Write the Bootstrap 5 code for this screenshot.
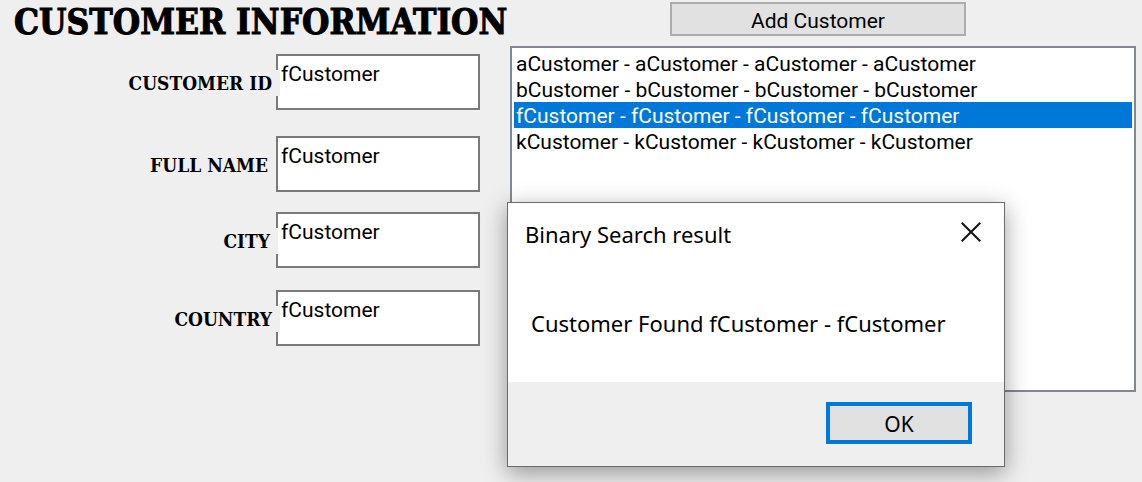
<!DOCTYPE html>
<html lang="en">
<head>
<meta charset="utf-8">
<meta name="viewport" content="width=device-width, initial-scale=1">
<title>Customer Information</title>
<link href="https://cdn.jsdelivr.net/npm/bootstrap@5.3.0/dist/css/bootstrap.min.css" rel="stylesheet">
<style>
  :root { --face: #efefef; --ctl: #e1e1e1; --accent: #0078d9; }
  body {
    background: var(--face); color: #000; min-height: 100vh;
    font-family: Roboto, "Liberation Sans", sans-serif;
    font-size: 21px; line-height: 26px;
  }
  .stencil { font-family: "DejaVu Serif Condensed", "DejaVu Serif", serif; font-weight: 700; text-transform: uppercase; }
  .app-head { height: 46px; padding: 2px 176px 0 14px; }
  .app-title { font-size: 35px; line-height: 40px; white-space: nowrap; -webkit-text-stroke: 1px #000; }
  .add-btn { width: 296px; height: 34px; background: var(--ctl); border: 2px solid #adadad; border-radius: 0; font-size: 21px; line-height: 26px; color: #000; padding: 4px 0 0; }
  .fields { width: 480px; margin-top: 8px; display: grid; grid-template-rows: 82px 76px 78px 56px; }
  .field-label { position: relative; z-index: 1; background: var(--face); font-size: 19px; line-height: 26px; margin-top: 16px; padding-right: 8px; }
  .lap-2 { margin-right: -2px; }
  .lap-4 { margin-right: -4px; }
  .field-box { width: 204px; height: 56px; padding: 2px 3px 18px; border: 2px solid #7a7a7a; border-radius: 0; font-size: 21px; line-height: 32px; color: #000; background: #fff; }
  .result-list { height: 346px; margin: 0 6px 0 30px; padding: 2px; border: 2px solid #828790; border-radius: 0; background: #fff; font-size: 21px; color: #000; overflow: hidden; outline: 0; }
  .result-list option { height: 26px; min-height: 26px; padding: 2px 2px 0; border-radius: 0; }
  .result-list option:checked { background: linear-gradient(var(--accent), var(--accent)); -webkit-text-fill-color: #fff; }
  .msg-box { position: absolute; left: 507px; top: 202px; width: 498px; z-index: 5; background: #fff; border: 1px solid #6b6b6b; box-shadow: 0 6px 22px rgba(0,0,0,.38); font-family: "Noto Sans", sans-serif; font-size: 22px; line-height: 30px; }
  .msg-head { padding: 16px 23px 0 17px; }
  .msg-title { font-size: 22px; line-height: 30px; }
  .msg-close { margin-top: 3px; }
  .msg-text { padding: 59px 23px 44px; }
  .msg-foot { background: var(--face); padding: 20px 32px 22px; }
  .ok-btn { width: 146px; height: 42px; padding: 2px 0 0; background: var(--ctl); border: 4px solid var(--accent); border-radius: 0; font-family: inherit; font-size: 21px; line-height: 32px; color: #000; }
</style>
</head>
<body class="position-relative">
  <header class="app-head d-flex justify-content-between align-items-start">
    <h1 class="app-title stencil m-0">Customer Information</h1>
    <button type="button" class="btn add-btn">Add Customer</button>
  </header>

  <main class="d-flex align-items-start">
    <form class="fields flex-shrink-0">
      <div class="d-flex justify-content-end align-items-start">
        <label class="field-label stencil lap-4" for="customerId">Customer ID</label>
        <input class="field-box" id="customerId" type="text" value="fCustomer">
      </div>
      <div class="d-flex justify-content-end align-items-start">
        <label class="field-label stencil" for="fullName">Full Name</label>
        <input class="field-box" id="fullName" type="text" value="fCustomer">
      </div>
      <div class="d-flex justify-content-end align-items-start">
        <label class="field-label stencil lap-2" for="city">City</label>
        <input class="field-box" id="city" type="text" value="fCustomer">
      </div>
      <div class="d-flex justify-content-end align-items-start">
        <label class="field-label stencil lap-4" for="country">Country</label>
        <input class="field-box" id="country" type="text" value="fCustomer">
      </div>
    </form>

    <select class="result-list flex-grow-1" size="13" aria-label="Customers">
      <option>aCustomer - aCustomer - aCustomer - aCustomer</option>
      <option>bCustomer - bCustomer - bCustomer - bCustomer</option>
      <option selected>fCustomer - fCustomer - fCustomer - fCustomer</option>
      <option>kCustomer - kCustomer - kCustomer - kCustomer</option>
    </select>
  </main>

  <section class="msg-box" role="dialog" aria-labelledby="msgTitle">
    <div class="msg-head d-flex justify-content-between align-items-start">
      <h2 class="msg-title fw-normal m-0" id="msgTitle">Binary Search result</h2>
      <button type="button" class="btn msg-close p-0 border-0 d-flex" aria-label="Close">
        <svg width="20" height="20" viewBox="0 0 20 20" fill="none" stroke="#111" stroke-width="2"><path d="M.7.7 19.3 19.3M19.3.7.7 19.3"/></svg>
      </button>
    </div>
    <p class="msg-text m-0">Customer Found fCustomer - fCustomer</p>
    <div class="msg-foot d-flex justify-content-end">
      <button type="button" class="btn ok-btn">OK</button>
    </div>
  </section>
<script src="https://cdn.jsdelivr.net/npm/bootstrap@5.3.0/dist/js/bootstrap.bundle.min.js"></script>
</body>
</html>
